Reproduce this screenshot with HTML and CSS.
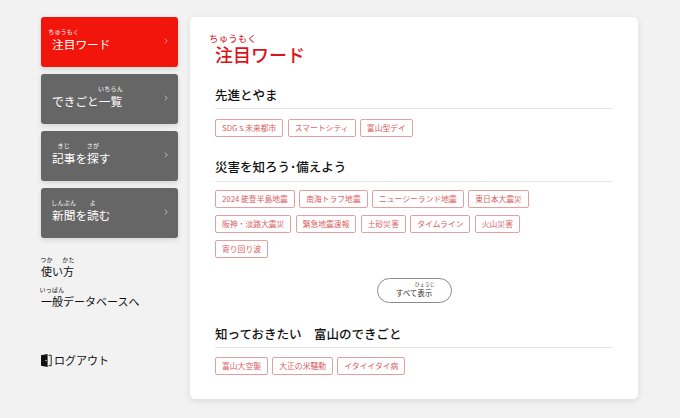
FILE: index.html
```html
<!DOCTYPE html>
<html lang="ja">
<head>
<meta charset="utf-8">
<title>注目ワード</title>
<link rel="stylesheet" href="styles.css">
</head>
<body>
<div class="page">
  <nav class="side">
    <a class="nav-card nav-card-active"><span class="nav-label"><ruby>注目<rt>ちゅうもく</rt></ruby>ワード</span><svg class="chev" viewBox="0 0 4 6"><path d="M.8.6 3.2 3 .8 5.4"/></svg></a>
    <a class="nav-card"><span class="nav-label">できごと<ruby>一覧<rt>いちらん</rt></ruby></span><svg class="chev" viewBox="0 0 4 6"><path d="M.8.6 3.2 3 .8 5.4"/></svg></a>
    <a class="nav-card"><span class="nav-label"><ruby>記事<rt>きじ</rt></ruby>を<ruby>探<rt>さが</rt></ruby>す</span><svg class="chev" viewBox="0 0 4 6"><path d="M.8.6 3.2 3 .8 5.4"/></svg></a>
    <a class="nav-card"><span class="nav-label"><ruby>新聞<rt>しんぶん</rt></ruby>を<ruby>読<rt>よ</rt></ruby>む</span><svg class="chev" viewBox="0 0 4 6"><path d="M.8.6 3.2 3 .8 5.4"/></svg></a>
    <a class="side-link side-link-first"><ruby>使<rt>つか</rt></ruby>い<ruby>方<rt>かた</rt></ruby></a>
    <a class="side-link"><ruby>一般<rt>いっぱん</rt></ruby>データベースへ</a>
    <a class="logout"><svg class="door" viewBox="0 0 11 13"><path d="M0 1.2 6.6 0v13L0 11.8z" fill="#111"/><path d="M7.6 1.3h2.6v10.4H7.6" fill="none" stroke="#111" stroke-width=".9"/><circle cx="5" cy="6.6" r=".7" fill="#fff"/></svg>ログアウト</a>
  </nav>
  <main class="panel">
    <h1 class="title"><ruby>注目<rt>ちゅうもく</rt></ruby>ワード</h1>
    <section class="group">
      <h2 class="group-head">先進とやま</h2>
      <div class="tags">
        <div class="tag-row"><a class="tag">SDGｓ未来都市</a><a class="tag">スマートシティ</a><a class="tag">富山型デイ</a></div>
      </div>
    </section>
    <section class="group">
      <h2 class="group-head group-head-wide">災害を知ろう･備えよう</h2>
      <div class="tags">
        <div class="tag-row"><a class="tag">2024 能登半島地震</a><a class="tag">南海トラフ地震</a><a class="tag">ニュージーランド地震</a><a class="tag">東日本大震災</a></div>
        <div class="tag-row"><a class="tag">阪神・淡路大震災</a><a class="tag">緊急地震速報</a><a class="tag">土砂災害</a><a class="tag">タイムライン</a><a class="tag">火山災害</a></div>
        <div class="tag-row"><a class="tag">寄り回り波</a></div>
      </div>
      <div class="more-row"><a class="more">すべて<ruby>表示<rt>ひょうじ</rt></ruby></a></div>
    </section>
    <section class="group">
      <h2 class="group-head group-head-tight">知っておきたい　富山のできごと</h2>
      <div class="tags">
        <div class="tag-row"><a class="tag">富山大空襲</a><a class="tag">大正の米騒動</a><a class="tag">イタイイタイ病</a></div>
      </div>
    </section>
  </main>
</div>
</body>
</html>
```
FILE: styles.css
```css
* { box-sizing: border-box; }
html, body { margin: 0; height: 100%; }
body {
  background: #f2f2f2;
  color: #111;
  font-family: "Noto Sans CJK JP", "Noto Sans", sans-serif;
  overflow: hidden;
}
.page {
  display: flex;
  gap: 12px;
  padding: 17px 42px 0 41px;
  align-items: flex-start;
}
.side {
  width: 137px;
  flex: none;
  display: flex;
  flex-direction: column;
  gap: 7px;
}
ruby {
  position: relative;
  display: inline-block;
  ruby-position: over;
}
rt {
  position: absolute;
  left: 50%;
  bottom: 100%;
  transform: translateX(-50%);
  white-space: nowrap;
  text-align: center;
  line-height: 1;
  font-size: 6px;
  letter-spacing: .2px;
  margin-bottom: 1px;
}
.nav-card {
  height: 50px;
  border-radius: 3px;
  background: #666;
  color: #fff;
  display: flex;
  align-items: center;
  justify-content: space-between;
  padding: 3px 10px 0 11px;
  box-shadow: 0 2px 5px rgba(0,0,0,.12);
}
.nav-card-active { background: #f2150b; }
.nav-label {
  font-size: 11.7px;
  line-height: 16px;
  letter-spacing: 0;
}
.chev {
  width: 4px;
  height: 6px;
  margin-top: -5px;
  fill: none;
  stroke: #ddd;
  stroke-width: .7;
}
.side-link {
  font-size: 11px;
  line-height: 16px;
  color: #111;
  display: block;
  margin-top: 7px;
}
.side-link rt { margin-bottom: 0; }
.side-link-first { margin-top: 18px; }
.logout {
  display: flex;
  align-items: center;
  gap: 2px;
  font-size: 11px;
  line-height: 16px;
  margin-top: 36px;
}
.door { width: 11px; height: 13px; flex: none; }
.panel {
  width: 448px;
  height: 382px;
  background: #fff;
  border-radius: 5px;
  padding: 28px 25px 0;
  box-shadow: 0 2px 6px rgba(0,0,0,.1);
}
.title {
  margin: 0 0 23px;
  font-size: 18px;
  line-height: 18px;
  font-weight: 500;
  color: #d8151b;
}
.title rt { font-size: 9.4px; margin-bottom: 2px; font-weight: 400; }
.group { margin-bottom: 21px; }
.group-head {
  margin: 0 0 10px;
  padding-bottom: 4px;
  font-size: 12.5px;
  line-height: 18px;
  font-weight: 500;
  color: #111;
  border-bottom: 1px solid #e6e6e6;
}
.group-head-wide { padding-bottom: 5px; margin-bottom: 8px; }
.group-head-tight { margin-bottom: 9px; }
.tags {
  display: flex;
  flex-direction: column;
  gap: 7px;
}
.tag-row {
  display: flex;
  gap: 4.3px;
}
.tag {
  height: 18px;
  padding: 0 6px;
  border: 1px solid #e3a0a0;
  border-radius: 2px;
  color: #d9605f;
  font-size: 7.8px;
  line-height: 16px;
  white-space: nowrap;
}
.more-row {
  display: flex;
  justify-content: center;
  margin: 20px 0 22px;
}
.more {
  width: 75px;
  height: 25px;
  border: 1px solid #8c8c8c;
  border-radius: 13px;
  font-size: 7.5px;
  line-height: 12px;
  color: #333;
  display: flex;
  align-items: center;
  justify-content: center;
  padding-top: 5px;
}
.more rt { font-size: 4.8px; margin-bottom: 0; }
```
